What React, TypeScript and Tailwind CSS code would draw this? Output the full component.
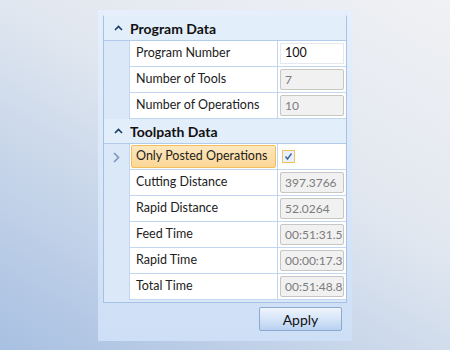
const font = { fontFamily: 'Lato, "Noto Sans", sans-serif' };

type Row = { label: string; value: string; editable?: boolean; check?: boolean };

const programRows: Row[] = [
  { label: "Program Number", value: "100", editable: true },
  { label: "Number of Tools", value: "7" },
  { label: "Number of Operations", value: "10" },
];

const toolpathRows: Row[] = [
  { label: "Only Posted Operations", value: "", check: true },
  { label: "Cutting Distance", value: "397.3766" },
  { label: "Rapid Distance", value: "52.0264" },
  { label: "Feed Time", value: "00:51:31.5" },
  { label: "Rapid Time", value: "00:00:17.3" },
  { label: "Total Time", value: "00:51:48.8" },
];

const Chevron = () => (
  <svg width="9" height="6" viewBox="0 0 9 6" className="mr-[7px]">
    <path d="M1 5 L4.5 1.5 L8 5" fill="none" stroke="#1e3b66" strokeWidth="1.6" />
  </svg>
);

const Header = ({ title }: { title: string }) => (
  <div className="flex h-[25px] items-center border-b border-[#b3cbea] bg-[#e3eefb] pl-[10px]">
    <Chevron />
    <span className="text-[14px] font-bold text-[#111]">{title}</span>
  </div>
);

const DataRow = ({ row, selected }: { row: Row; selected?: boolean }) => (
  <div className="flex h-[26px]">
    <div className="flex w-[25px] shrink-0 items-center justify-center">
      {selected && (
        <svg width="7" height="11" viewBox="0 0 7 11">
          <path d="M1 1 L5.5 5.5 L1 10" fill="none" stroke="#7a96bd" strokeWidth="1.6" />
        </svg>
      )}
    </div>
    <div className="flex min-w-0 flex-1 border-b border-l border-[#c3d6f0] bg-white">
      <div className="flex w-[148px] shrink-0 items-center border-r border-[#c3d6f0] p-[1px]">
        {row.check ? (
          <div className="flex h-full w-full items-center rounded-[2px] border border-[#f2bf5c] bg-gradient-to-b from-[#fde8bf] to-[#fcd696] pl-[4px] text-[12.5px] text-[#222]">
            {row.label}
          </div>
        ) : (
          <span className="pl-[5px] text-[12.5px] text-[#222]">{row.label}</span>
        )}
      </div>
      <div className="flex min-w-0 flex-1 items-center p-[2px]">
        {row.check ? (
          <div className="ml-[2px] flex h-[13px] w-[13px] items-center justify-center border border-[#f0c15c] bg-[#eaf1fb]">
            <svg width="9" height="9" viewBox="0 0 9 9">
              <path d="M1.5 4.5 L3.5 7 L7.5 1.5" fill="none" stroke="#3b64a8" strokeWidth="1.4" />
            </svg>
          </div>
        ) : row.editable ? (
          <div className="flex h-full w-full items-center border border-[#e4e9f0] bg-white pl-[4px] text-[12.5px] text-[#111]">
            {row.value}
          </div>
        ) : (
          <div className="flex h-full w-full items-center overflow-hidden whitespace-nowrap rounded-[2px] border border-[#c6c6c6] bg-[#f1f1f1] pl-[4px] text-[12px] text-[#7c7c7c]">
            {row.value}
          </div>
        )}
      </div>
    </div>
  </div>
);

export default function App() {
  return (
    <div
      className="h-[350px] w-[450px] overflow-hidden bg-[linear-gradient(210deg,#f0f1f4_0%,#e2e8f0_40%,#a8c0e2_100%)] pt-[10px] pl-[98px]"
      style={font}
    >
      <div className="flex h-[331px] w-[254px] flex-col bg-gradient-to-b from-[#e6effb] to-[#cddff6] px-[5px] pt-[5px]">
        <div className="border border-[#a7c1e4] border-t-[#e8effa] bg-[#dbe8f8] pb-[2px]">
          <Header title="Program Data" />
          {programRows.map((r) => (
            <DataRow key={r.label} row={r} />
          ))}
          <Header title="Toolpath Data" />
          {toolpathRows.map((r, i) => (
            <DataRow key={r.label} row={r} selected={i === 0} />
          ))}
        </div>
        <div className="mt-[4px] flex justify-end pr-[5px]">
          <button className="h-[24px] w-[83px] rounded-[2px] border border-[#8ea9d0] bg-gradient-to-b from-[#eef4fc] via-[#d6e5f8] to-[#b8d1f1] text-[14px] text-[#111]">
            Apply
          </button>
        </div>
      </div>
    </div>
  );
}
